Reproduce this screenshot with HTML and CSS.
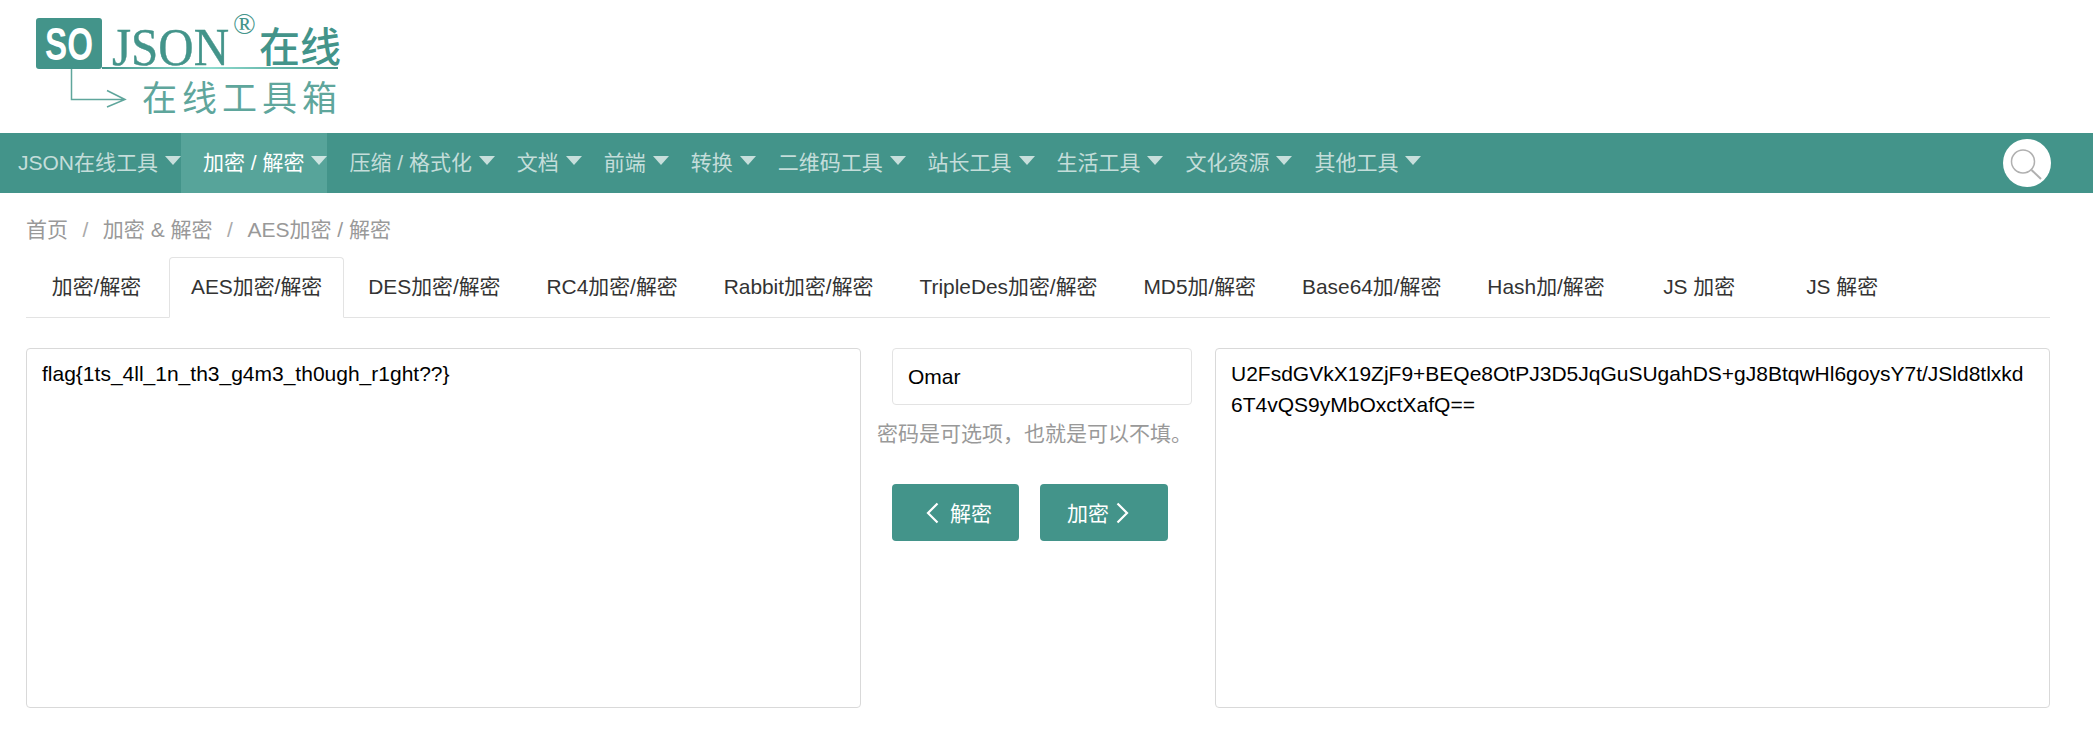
FILE: index.html
```html
<!DOCTYPE html>
<html lang="zh-CN">
<head>
<meta charset="utf-8">
<title>AES加密 / 解密</title>
<link rel="stylesheet" href="styles.css">
</head>
<body>
<header class="logo-row">
  <svg class="logo" width="400" height="133" viewBox="0 0 400 133">
    <defs>
      <linearGradient id="rule" x1="0" x2="1" y1="0" y2="0">
        <stop offset="0" stop-color="#43948a"/>
        <stop offset=".45" stop-color="#8fdccf"/>
        <stop offset="1" stop-color="#43948a"/>
      </linearGradient>
    </defs>
    <rect x="36" y="18" width="66" height="51" rx="3" fill="#43948a"/>
    <text x="69" y="60" class="logo-so" text-anchor="middle" textLength="48" lengthAdjust="spacingAndGlyphs">SO</text>
    <text x="112" y="65" class="logo-json" textLength="117" lengthAdjust="spacingAndGlyphs">JSON</text>
    <text x="233" y="34" class="logo-reg">®</text>
    <text x="259" y="62" class="logo-cn">在线</text>
    <rect x="102" y="67" width="236" height="2" fill="url(#rule)"/>
    <path d="M71.500 69V99.500H125M107 90.500L125 99.500L107 107" fill="none" stroke="#5fa69c" stroke-width="1.500"/>
    <text x="142" y="111" class="logo-sub">在线工具箱</text>
  </svg>
</header>
<nav class="nav">
  <a class="nav-item first">JSON在线工具<i class="caret"></i></a>
  <a class="nav-item active">加密 / 解密<i class="caret"></i></a>
  <a class="nav-item">压缩 / 格式化<i class="caret"></i></a>
  <a class="nav-item">文档<i class="caret"></i></a>
  <a class="nav-item">前端<i class="caret"></i></a>
  <a class="nav-item">转换<i class="caret"></i></a>
  <a class="nav-item">二维码工具<i class="caret"></i></a>
  <a class="nav-item">站长工具<i class="caret"></i></a>
  <a class="nav-item">生活工具<i class="caret"></i></a>
  <a class="nav-item">文化资源<i class="caret"></i></a>
  <a class="nav-item">其他工具<i class="caret"></i></a>
  <span class="search">
    <svg width="48" height="48" viewBox="0 0 48 48"><circle cx="20" cy="22.500" r="11.500" fill="none" stroke="#b0b0b0" stroke-width="1.500"/><path d="M28.500 31L38 40" stroke="#b0b0b0" stroke-width="2" fill="none"/></svg>
  </span>
</nav>
<main class="page">
  <ol class="crumbs">
    <li>首页</li><li class="sep">/</li><li>加密 &amp; 解密</li><li class="sep">/</li><li>AES加密 / 解密</li>
  </ol>
  <ul class="tabs">
    <li class="tab">加密/解密</li>
    <li class="tab current">AES加密/解密</li>
    <li class="tab">DES加密/解密</li>
    <li class="tab">RC4加密/解密</li>
    <li class="tab">Rabbit加密/解密</li>
    <li class="tab">TripleDes加密/解密</li>
    <li class="tab">MD5加/解密</li>
    <li class="tab">Base64加/解密</li>
    <li class="tab">Hash加/解密</li>
    <li class="tab">JS 加密</li>
    <li class="tab">JS 解密</li>
  </ul>
  <section class="work">
    <div class="box">flag{1ts_4ll_1n_th3_g4m3_th0ugh_r1ght??}</div>
    <div class="mid">
      <div class="pwd">Omar</div>
      <p class="hint">密码是可选项，也就是可以不填。</p>
      <div class="btns">
        <button class="btn dec"><svg width="13" height="22" viewBox="0 0 13 22"><path d="M11.500 1.500L2 11L11.500 20.500" fill="none" stroke="#fff" stroke-width="2.200"/></svg>解密</button>
        <button class="btn enc">加密<svg width="13" height="22" viewBox="0 0 13 22"><path d="M1.500 1.500L11 11L1.500 20.500" fill="none" stroke="#fff" stroke-width="2.200"/></svg></button>
      </div>
    </div>
    <div class="box">U2FsdGVkX19ZjF9+BEQe8OtPJ3D5JqGuSUgahDS+gJ8BtqwHl6goysY7t/JSld8tlxkd6T4vQS9yMbOxctXafQ==</div>
  </section>
</main>
</body>
</html>
```
FILE: styles.css
```css
* { box-sizing: border-box; }
html, body { margin: 0; padding: 0; }
body {
  background: #fff;
  color: #333;
  font-family: "Liberation Sans", "Noto Sans CJK SC", sans-serif;
  font-size: 21px;
  overflow: hidden;
}
.logo-row { height: 133px; }
.logo { display: block; }
.logo-so { font: bold 46px "Liberation Sans", sans-serif; fill: #fff; }
.logo-json { font: 52px "Liberation Serif", serif; fill: #43948a; stroke: #43948a; stroke-width: .4px; }
.logo-reg { font: 30px "Liberation Serif", serif; fill: #43948a; }
.logo-cn { font: 500 41px "Noto Sans CJK SC", serif; fill: #43948a; }
.logo-sub { font: 35px "Noto Sans CJK SC", serif; fill: #5fa69c; letter-spacing: 5px; }

.nav {
  display: flex;
  align-items: center;
  height: 60px;
  background: #43948a;
  color: rgba(255, 255, 255, .7);
}
.nav-item {
  display: flex;
  align-items: center;
  height: 100%;
  padding: 0 0 4px 22px;
}
.nav-item.first { padding-left: 18px; }
.nav-item.active { background: #57a49a; color: #fff; }
.caret {
  width: 0;
  height: 0;
  margin: 0 0 2px 6.950px;
  border-left: 8px solid transparent;
  border-right: 8px solid transparent;
  border-top: 9px solid rgba(255, 255, 255, .7);
}
.search {
  width: 48px;
  height: 48px;
  margin-left: auto;
  margin-right: 42px;
  border-radius: 50%;
  background: #fff;
}
.search svg { display: block; }

.page { padding: 0 43px 0 26px; }
.crumbs {
  display: flex;
  gap: 14.500px;
  height: 64px;
  margin: 0;
  padding: 21px 0 0;
  list-style: none;
  color: #999;
  line-height: 32px;
}
.crumbs .sep { color: #aaa; }
.tabs {
  display: flex;
  height: 61px;
  margin: 0;
  padding: 0;
  list-style: none;
  border-bottom: 1px solid #e3e3e3;
  font-size: 20.900px;
}
.tab {
  min-width: 141px;
  height: 61px;
  margin-right: 2px;
  padding: 0 21px;
  border: 1px solid transparent;
  border-radius: 4px 4px 0 0;
  line-height: 58px;
  text-align: center;
  white-space: nowrap;
}
.tab.current {
  background: #fff;
  border-color: #e3e3e3 #e3e3e3 #fff;
}
.work {
  display: grid;
  grid-template-columns: 835px 354px 835px;
  margin-top: 30px;
  color: #000;
}
.box {
  height: 360px;
  padding: 9px 15px;
  border: 1px solid #d9d9d9;
  border-radius: 4px;
  line-height: 31px;
  overflow-wrap: anywhere;
}
.mid { display: flex; flex-direction: column; padding-left: 31px; }
.pwd {
  width: 300px;
  height: 57px;
  padding: 0 15px;
  border: 1px solid #e3e3e3;
  border-radius: 4px;
  line-height: 55px;
}
.hint {
  width: 320px;
  margin: 13px 0 0 -15px;
  color: #999;
  line-height: 32px;
  white-space: nowrap;
}
.btns { display: flex; gap: 21px; margin-top: 34px; }
.btn {
  display: flex;
  align-items: center;
  height: 57px;
  border: 0;
  border-radius: 4px;
  background: #43948a;
  color: #fff;
  font: inherit;
}
.btn svg { margin-top: 2px; }
.btn.dec { width: 127px; padding: 0 0 2px 34px; gap: 11px; }
.btn.enc { width: 128px; padding: 0 0 2px 27px; gap: 7px; }
```
